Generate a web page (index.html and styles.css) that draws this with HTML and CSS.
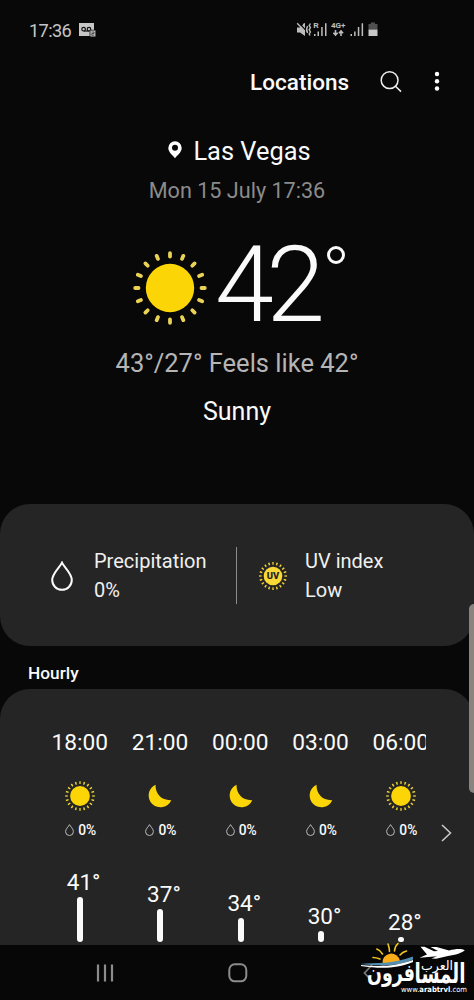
FILE: index.html
```html
<!DOCTYPE html>
<html lang="en">
<head>
<meta charset="utf-8">
<title>Weather</title>
<link rel="stylesheet" href="styles.css">
</head>
<body>
<svg class="defs" width="0" height="0">
  <symbol id="sun" viewBox="0 0 32 32">
    <circle cx="16" cy="16" r="9.9" fill="#fbd505"/>
    <circle cx="16" cy="16" r="13.4" fill="none" stroke="#ecd23a" stroke-width="2.8" pathLength="20" stroke-dasharray=".34 .66" stroke-dashoffset=".17"/>
  </symbol>
  <symbol id="moon" viewBox="0 0 24 24">
    <path d="M7.500 .8C7.500 10 13 16.500 23.300 16.200A11.800 11.800 0 1 1 7.500 .8Z" fill="#fbd505"/>
  </symbol>
  <symbol id="drop" viewBox="0 0 22 30">
    <path d="M11 1.6C9 6 1.2 12.2 1.2 19A9.8 9.8 0 0 0 20.8 19C20.8 12.2 13 6 11 1.6Z" fill="none" stroke="currentColor"/>
  </symbol>
</svg>
<div class="phone">
  <div class="status">
    <span class="clock">17:36</span>
    <svg class="voicemail" width="17" height="14" viewBox="0 0 17 14">
      <path d="M0 0H15V13H0Z" fill="#c6c6c6"/>
      <g fill="none" stroke="#111" stroke-width="1.2"><circle cx="4.6" cy="6.2" r="1.8"/><circle cx="10" cy="6.2" r="1.8"/><path d="M4.6 8H10"/></g>
      <rect x="10.6" y="6.8" width="6.4" height="7" fill="#111"/>
      <rect x="11.4" y="7.5" width="5" height="6" fill="#c6c6c6"/>
      <path d="M12.6 9H15.1V10.5H12.8V12.2H15.3" fill="none" stroke="#222" stroke-width=".7"/>
    </svg>
    <svg class="signals" width="84" height="16" viewBox="0 0 84 16" fill="#bdbdbd">
      <path d="M1 5.5H4L9 1V14L4 10.5H1Z"/>
      <path d="M2.500 .5L9.500 8" stroke="#080808" stroke-width="1.2"/>
      <path d="M1.2 1.2L9 9.500" stroke="#bdbdbd" stroke-width="1.3"/>
      <path d="M8.500 1.200L7.300 3.500M11.600 4Q9.600 7.500 11.600 11M14.400 1.500L13.200 3.600L14.400 5.600L13.200 7.800L14.400 10L13.200 12L14 13.500" fill="none" stroke="#bdbdbd" stroke-width="1.4"/>
      <text class="tiny" x="17.300" y="5.900" textLength="5.500" lengthAdjust="spacingAndGlyphs">R</text>
      <path d="M18 12h1.500v2H18zM21.500 9.500H23V14h-1.500zM25.200 5h1.500v9h-1.500zM29 1.200h1.500V14H29z"/>
      <text class="tiny" x="35" y="6.200" textLength="14.500" lengthAdjust="spacingAndGlyphs">4G+</text>
      <path d="M39.500 8V13M37.400 10.800L39.500 13L41.600 10.800M45 14V9M42.900 11.200L45 9L47.100 11.200" fill="none" stroke="#bdbdbd" stroke-width="1.600"/>
      <path d="M54.500 12H56v2h-1.500zM58.100 9.500h1.500V14h-1.500zM61.800 5h1.500v9h-1.500zM65.600 1.200H67.100V14h-1.500z"/>
      <path d="M74.800 .5H79V2H81.500V7.500H72.500V2H74.800Z" fill="#505050"/>
      <path d="M72.500 7.500h9V14h-9z" fill="#c8c8c8"/>
    </svg>
  </div>

  <div class="toolbar">
    <span class="locations">Locations</span>
    <svg class="search" width="22" height="22" viewBox="0 0 22 22" fill="none" stroke="#eee" stroke-width="1.5"><circle cx="9.600" cy="9.200" r="8.400"/><path d="M15.500 15.200L21 20.600"/></svg>
    <svg class="more" width="6" height="20" viewBox="0 0 6 20" fill="#fff"><circle cx="3" cy="2" r="2.200"/><circle cx="3" cy="9.200" r="2.200"/><circle cx="3" cy="16.500" r="2.200"/></svg>
  </div>

  <div class="current">
    <div class="city">
      <svg width="14" height="18" viewBox="0 0 14 18"><path fill="#fff" fill-rule="evenodd" d="M7 .3A6.700 6.700 0 0 1 13.700 7C13.700 11 9.500 14 7 17.300C4.500 14 .3 11 .3 7A6.700 6.700 0 0 1 7 .3ZM7 3.800A3 3 0 1 0 7 9.800A3 3 0 0 0 7 3.800Z"/></svg>
      <span>Las Vegas</span>
    </div>
    <div class="date">Mon 15 July 17:36</div>
    <div class="hero">
      <svg width="74" height="74" viewBox="-37 -37 74 74">
        <circle r="24.200" fill="#fbd505"/>
        <g stroke="#e9d255" stroke-width="3.800" stroke-linecap="round">
          <path id="ray" d="M0 -31.500V-34.800M0 31.500V34.800M-31.500 0H-34.800M31.500 0H34.800"/>
          <use href="#ray" transform="rotate(22.500)"/><use href="#ray" transform="rotate(45)"/><use href="#ray" transform="rotate(67.500)"/>
        </g>
      </svg>
      <span class="temp">42</span><span class="degree"></span>
    </div>
    <div class="feels">43°/27° Feels like 42°</div>
    <div class="condition">Sunny</div>
  </div>

  <div class="card details">
    <div class="detail">
      <svg class="drop-large" width="22" height="30"><use href="#drop"/></svg>
      <div class="lines"><div class="precip">Precipitation</div><div>0%</div></div>
    </div>
    <div class="divider"></div>
    <div class="detail uv">
      <svg width="30" height="30" viewBox="-15 -15 30 30">
        <circle r="9.300" fill="#fbd835"/>
        <circle r="12.600" fill="none" stroke="#fbd835" stroke-width="2.600" pathLength="20" stroke-dasharray=".34 .66" stroke-dashoffset=".17"/>
        <text class="uv-mark" y="3" text-anchor="middle" textLength="12.500" lengthAdjust="spacingAndGlyphs">UV</text>
      </svg>
      <div class="lines"><div>UV index</div><div>Low</div></div>
    </div>
  </div>

  <div class="section-title">Hourly</div>

  <div class="card hourly">
    <div class="hours">
      <div class="hour"><div class="time">18:00</div><svg class="sky" width="32" height="32"><use href="#sun"/></svg><div class="rain"><svg width="9" height="12"><use href="#drop"/></svg>0%</div><div class="graph"><span>41°</span><i style="height:45.500px"></i></div></div>
      <div class="hour"><div class="time">21:00</div><svg class="sky" width="24" height="32"><use href="#moon"/></svg><div class="rain"><svg width="9" height="12"><use href="#drop"/></svg>0%</div><div class="graph"><span>37°</span><i style="height:33px"></i></div></div>
      <div class="hour"><div class="time">00:00</div><svg class="sky" width="24" height="32"><use href="#moon"/></svg><div class="rain"><svg width="9" height="12"><use href="#drop"/></svg>0%</div><div class="graph"><span>34°</span><i style="height:24px"></i></div></div>
      <div class="hour"><div class="time">03:00</div><svg class="sky" width="24" height="32"><use href="#moon"/></svg><div class="rain"><svg width="9" height="12"><use href="#drop"/></svg>0%</div><div class="graph"><span>30°</span><i style="height:11.500px"></i></div></div>
      <div class="hour"><div class="time">06:00</div><svg class="sky" width="32" height="32"><use href="#sun"/></svg><div class="rain"><svg width="9" height="12"><use href="#drop"/></svg>0%</div><div class="graph"><span>28°</span><i style="height:5.500px"></i></div></div>
    </div>
    <svg class="next" width="11" height="18" viewBox="0 0 11 18" fill="none" stroke="#ccc" stroke-width="1.500"><path d="M1 1L9.500 9L1 17"/></svg>
  </div>

  <div class="navbar">
    <svg width="18" height="18" viewBox="0 0 18 18" stroke="#8c8c8c" stroke-width="2.200"><path d="M2 .5V17.500M9 .5V17.500M16 .5V17.500"/></svg>
    <svg width="20" height="20" viewBox="0 0 20 20" fill="none" stroke="#8c8c8c" stroke-width="2"><rect x="1.300" y="1.300" width="17" height="17" rx="5.500"/></svg>
    <svg width="10" height="18" viewBox="0 0 10 18" fill="none" stroke="#777" stroke-width="1.800"><path d="M9 1L1.500 9L9 17"/></svg>
  </div>

  <div class="scroll-handle"></div>
  <svg class="watermark" width="114" height="60" viewBox="360 940 114 60">
    <g fill="none" stroke="#f0c51d" stroke-width="1.600" stroke-linecap="round">
      <path d="M373 957.500Q376 957.500 380 959M376.800 949Q380.500 950.500 382.500 954M388 944Q389.500 948 389.500 951.500M398 943.500Q395 946 394.500 951M406.500 951Q402.500 952 400 955"/>
    </g>
    <path d="M382.500 964A8.800 8.800 0 1 1 400 961L391 964.500Z" fill="#faad19"/>
    <path d="M360 964C376 962.500 392 964.500 413 956.500V959.500C396 967.500 378 965.500 360 964Z" fill="#528fb2"/>
    <path d="M361 965C378 966.500 394 967 413 960V962C394 970 377 968 361 966Z" fill="#fff"/>
    <path d="M420.500 946.700H424.500L434 951.300L438 951L430.500 947H436.500L449 950.500C456 948.500 462 948.500 464.800 950.200C463 952.500 455 955 448 956L436 958.700L431.500 958.500L437 956.200L419.500 957.800L427 954.500Z" fill="#fff"/>
    <text class="ar-big" x="465.500" y="983" direction="rtl" textLength="51" lengthAdjust="spacingAndGlyphs">المسا</text>
    <text class="ar-end" x="415" y="981" direction="rtl" textLength="48" lengthAdjust="spacingAndGlyphs">فرون</text>
    <text class="ar-small" x="453" y="970" direction="rtl" textLength="32" lengthAdjust="spacingAndGlyphs">العرب</text>
    <text class="site" x="401" y="992" textLength="66" lengthAdjust="spacingAndGlyphs">www.<tspan class="site-name">arabtrvl</tspan>.com</text>
  </svg>
</div>
</body>
</html>
```
FILE: styles.css
```css
* { box-sizing: border-box; }
body {
  margin: 0;
  background: #080808;
  color: #fafafa;
  font-family: Roboto, "Noto Sans", sans-serif;
}
svg { display: block; flex: none; overflow: visible; }
.defs { position: absolute; }
.phone {
  position: relative;
  width: 474px;
  height: 1000px;
  overflow: hidden;
  display: flex;
  flex-direction: column;
}
.phone > * { flex: none; }
.status { height: 60px; padding: 0 92px 0 29px; display: flex; align-items: center; }
.clock { font-size: 18.2px; line-height: 24px; color: #c4c4c4; width: 50px; letter-spacing: -.65px; padding-top: 1px; }
.signals { margin-left: auto; margin-right: 2px; }
.tiny { font: 700 7.5px Roboto, sans-serif; }

.toolbar { height: 44px; padding-right: 34px; display: flex; align-items: center; justify-content: flex-end; }
.locations { font-size: 22.5px; font-weight: 500; line-height: 30px; }
.search { margin-left: 31px; }
.more { margin-left: 32px; }

.current { height: 400px; padding-top: 32px; text-align: center; white-space: nowrap; }
.city { display: flex; justify-content: center; align-items: center; gap: 11px; font-size: 25.4px; line-height: 30px; padding-left: 5px; }
.city svg { margin-top: -2px; }
.date { margin-top: 10px; font-size: 21.6px; line-height: 30px; color: #8b8b8b; }
.hero { margin-top: 23px; height: 110px; padding-left: 133px; display: flex; align-items: center; }
.hero svg { margin-top: 8px; }
.temp { margin-left: 8px; width: 112px; text-align: left; font-size: 106px; font-weight: 300; line-height: 110px; letter-spacing: -7.500px; padding-top: 2px; }
.degree { width: 18px; height: 18px; border: 3.500px solid #fafafa; border-radius: 50%; align-self: flex-start; margin-top: 17px; }
.feels { margin-top: 9px; font-size: 25.5px; line-height: 30px; color: #b5b5b5; }
.condition { margin-top: 19px; font-size: 25px; line-height: 30px; }

.card { background: #252525; border-radius: 30px; }
.details { height: 142px; padding-left: 51px; display: flex; align-items: center; }
.detail { display: flex; align-items: center; gap: 21px; }
.detail > svg { margin-top: 1px; }
.drop-large { stroke-width: 2; }
.lines { font-size: 20px; line-height: 29px; white-space: nowrap; color: #f0f0f0; padding-top: 2px; }
.detail:first-child { width: 185px; }
.divider { width: 1px; height: 57px; background: #8d8d8d; }
.uv { padding-left: 21px; gap: 17px; }
.uv-mark { font: 900 8.5px Roboto, sans-serif; fill: #252525; }

.section-title { height: 43px; padding: 12px 28px 0; font-size: 17.300px; font-weight: 500; line-height: 30px; }
.hourly { height: 256px; padding-left: 40px; border-radius: 30px 30px 0 0; display: flex; }
.hours { width: 386px; display: flex; overflow: hidden; }
.hour { flex: none; width: 80.300px; display: flex; flex-direction: column; align-items: center; }
.time { margin-top: 39px; margin-left: -1px; font-size: 22.700px; line-height: 30px; }
.sky { margin: 22px 0 0; }
.rain { margin-top: 8px; display: flex; align-items: center; gap: 4px; padding-left: 1px; font-size: 13.800px; font-weight: 500; line-height: 20px; }
.rain svg { color: #bbb; stroke-width: 2.500; }
.graph { height: 102px; display: flex; flex-direction: column; align-items: center; justify-content: flex-end; }
.graph span { font-size: 22.500px; line-height: 29px; padding-left: 7px; }
.graph i { width: 6px; background: #fafafa; border-radius: 3px; }
.next { margin: 135px 0 0 15px; }

.navbar { height: 55px; padding: 0 101px 0 95.500px; display: flex; justify-content: space-between; align-items: center; background: #070707; }
.scroll-handle { position: absolute; right: 0; top: 604px; width: 5px; height: 189px; border-radius: 5px 0 0 5px; background: #8a8480; }
.watermark { position: absolute; right: 0; bottom: 0; fill: #fff; }
.ar-big { font: 700 28px "DejaVu Sans", sans-serif; }
.ar-end { font: 700 24px "DejaVu Sans", sans-serif; }
.ar-small { font: 400 12.500px "DejaVu Sans", sans-serif; }
.site { font: 500 7.500px "DejaVu Sans", sans-serif; }
.site-name { font-weight: 700; }
```
